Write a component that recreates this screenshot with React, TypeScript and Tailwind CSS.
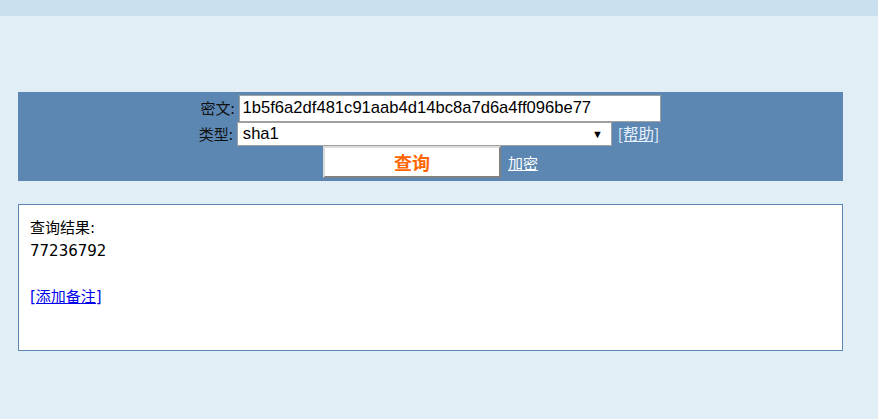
import React from 'react'

const cjk = { fontFamily: '"Noto Sans CJK SC", sans-serif' }

export default function App() {
  return (
    <div
      className="h-[419px] w-[878px] bg-[#e1eef6]"
      style={{ fontFamily: '"Liberation Sans", "Noto Sans CJK SC", sans-serif' }}
    >
      <div className="h-4 bg-[#cae0ee]" />

      <div className="mx-[18px] mt-[76px] flex h-[89px] w-[825px] flex-col items-center bg-[#5b87b2] pt-[3px]">
        <div className="flex h-[27px] items-center">
          <span className="mr-[4px] text-[15px] text-[#111]" style={cjk}>
            密文:
          </span>
          <div className="flex h-[27px] w-[422px] items-center border border-[#a0a0a0] bg-white pl-[3px] text-[16.6px] text-black">
            1b5f6a2df481c91aab4d14bc8a7d6a4ff096be77
          </div>
        </div>

        <div className="ml-[-3px] flex h-[24px] items-center">
          <span className="mr-[4px] text-[15px] text-[#111]" style={cjk}>
            类型:
          </span>
          <div className="flex h-[24px] w-[375px] items-center justify-between border border-[#a0a0a0] bg-white pl-[5px] pr-[8px] text-[16.6px] text-black">
            <span>sha1</span>
            <span className="text-[11px]">▼</span>
          </div>
          <a
            href="#"
            className="ml-[6px] text-[15.5px] text-[#e8f2ff] underline"
            style={cjk}
          >
            [帮助]
          </a>
        </div>

        <div className="flex items-center">
          <button
            className="flex h-[32px] w-[178px] items-center justify-center border-2 border-b-[#808080] border-l-[#dcdcdc] border-r-[#808080] border-t-[#dcdcdc] bg-white text-[18px] font-bold text-[#ff6600]"
            style={cjk}
          >
            查询
          </button>
          <a
            href="#"
            className="ml-[7px] mt-[2px] text-[15px] text-white underline"
            style={cjk}
          >
            加密
          </a>
        </div>
      </div>

      <div
        className="mx-[18px] mt-[23px] h-[147px] w-[825px] border border-[#5b87b2] bg-white px-[11px] pt-[12px] text-[15px] leading-[23px] text-black"
        style={{ fontFamily: '"DejaVu Sans", "Noto Sans CJK SC", sans-serif' }}
      >
        <div>查询结果:</div>
        <div>77236792</div>
        <div className="h-[23px]" />
        <a href="#" className="text-[#0000ee] underline">
          [添加备注]
        </a>
      </div>
    </div>
  )
}
